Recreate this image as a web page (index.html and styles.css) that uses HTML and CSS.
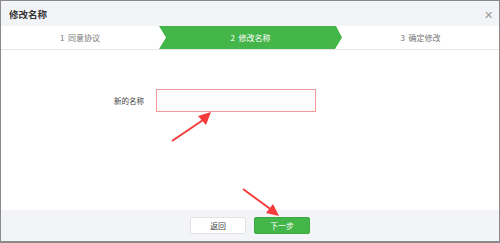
FILE: index.html
```html
<!DOCTYPE html>
<html lang="zh">
<head>
    <meta charset="UTF-8">
    <title>修改名称</title>
    <link rel="stylesheet" href="styles.css">
</head>
<body>
    <div class="dialog">
        <div class="dialog-header">
            <span class="title">修改名称</span>
            <span class="close">&#x2715;</span>
        </div>
        <div class="steps">
            <div class="step">1&nbsp;&nbsp;同意协议</div>
            <div class="step active">2&nbsp;&nbsp;修改名称</div>
            <div class="step">3&nbsp;&nbsp;确定修改</div>
        </div>
        <div class="dialog-body">
            <div class="form-row">
                <label for="newName">新的名称</label>
                <input type="text" id="newName">
            </div>
        </div>
        <div class="dialog-footer">
            <button class="btn btn-back">返回</button>
            <button class="btn btn-next">下一步</button>
        </div>

        <!-- 标注箭头 -->
        <svg class="mark mark-input" width="50" height="36" viewBox="0 0 50 36">
            <line x1="2" y1="33" x2="36" y2="10" stroke="#f53b3b" stroke-width="2"/>
            <polygon points="41,4 28,8 36,17" fill="#f53b3b"/>
        </svg>
        <svg class="mark mark-next" width="46" height="36" viewBox="0 0 46 36">
            <line x1="3" y1="3" x2="33" y2="25" stroke="#f53b3b" stroke-width="2"/>
            <polygon points="39,30 26,27 33,18" fill="#f53b3b"/>
        </svg>
    </div>
</body>
</html>
```

FILE: styles.css
```css
body {
    margin: 0;
    font-family: "Noto Sans CJK SC", "Liberation Sans", sans-serif;
    background: #fff;
}
.dialog {
    position: relative;
    width: 500px;
    height: 243px;
    box-sizing: border-box;
    border: 1px solid #8a8a8a;
    border-bottom-width: 2px;
    display: flex;
    flex-direction: column;
    background: #fff;
}
.dialog-header {
    height: 25px;
    background: #f3f4f8;
    display: flex;
    align-items: center;
    justify-content: space-between;
    padding: 0 6px 0 8px;
}
.title {
    font-size: 9.5px;
    font-weight: bold;
    color: #333;
}
.close {
    font-size: 11px;
    color: #999;
}
.steps {
    height: 23px;
    display: grid;
    grid-template-columns: 158px 183px 1fr;
    border-bottom: 1px solid #e6e6e6;
}
.step {
    display: flex;
    align-items: center;
    justify-content: center;
    font-size: 8px;
    color: #777;
}
.step.active {
    background: #44b549;
    color: #fff;
    clip-path: polygon(0 0, calc(100% - 6px) 0, 100% 50%, calc(100% - 7px) 100%, 0 100%, 7px 50%);
}
.dialog-body {
    flex: 1;
    padding-top: 39px;
}
.form-row {
    display: flex;
    align-items: center;
    padding-left: 113px;
}
.form-row label {
    font-size: 7.5px;
    color: #444;
    width: 42px;
}
.form-row input {
    width: 160px;
    height: 23px;
    box-sizing: border-box;
    border: 1px solid #f29a9a;
    background: #fcfcfc;
    outline: none;
}
.dialog-footer {
    height: 31px;
    background: #f3f4f8;
    display: flex;
    align-items: center;
    justify-content: center;
    gap: 8px;
}
.btn {
    width: 56px;
    height: 17px;
    font-family: inherit;
    font-size: 8px;
    border-radius: 2px;
    padding: 0;
}
.btn-back {
    background: #fff;
    border: 1px solid #e3e3e3;
    color: #444;
}
.btn-next {
    background: #44b549;
    border: 1px solid #3ea843;
    color: #fff;
}
.mark {
    position: absolute;
}
.mark-input {
    left: 169px;
    top: 107px;
}
.mark-next {
    left: 239px;
    top: 185px;
}
```
